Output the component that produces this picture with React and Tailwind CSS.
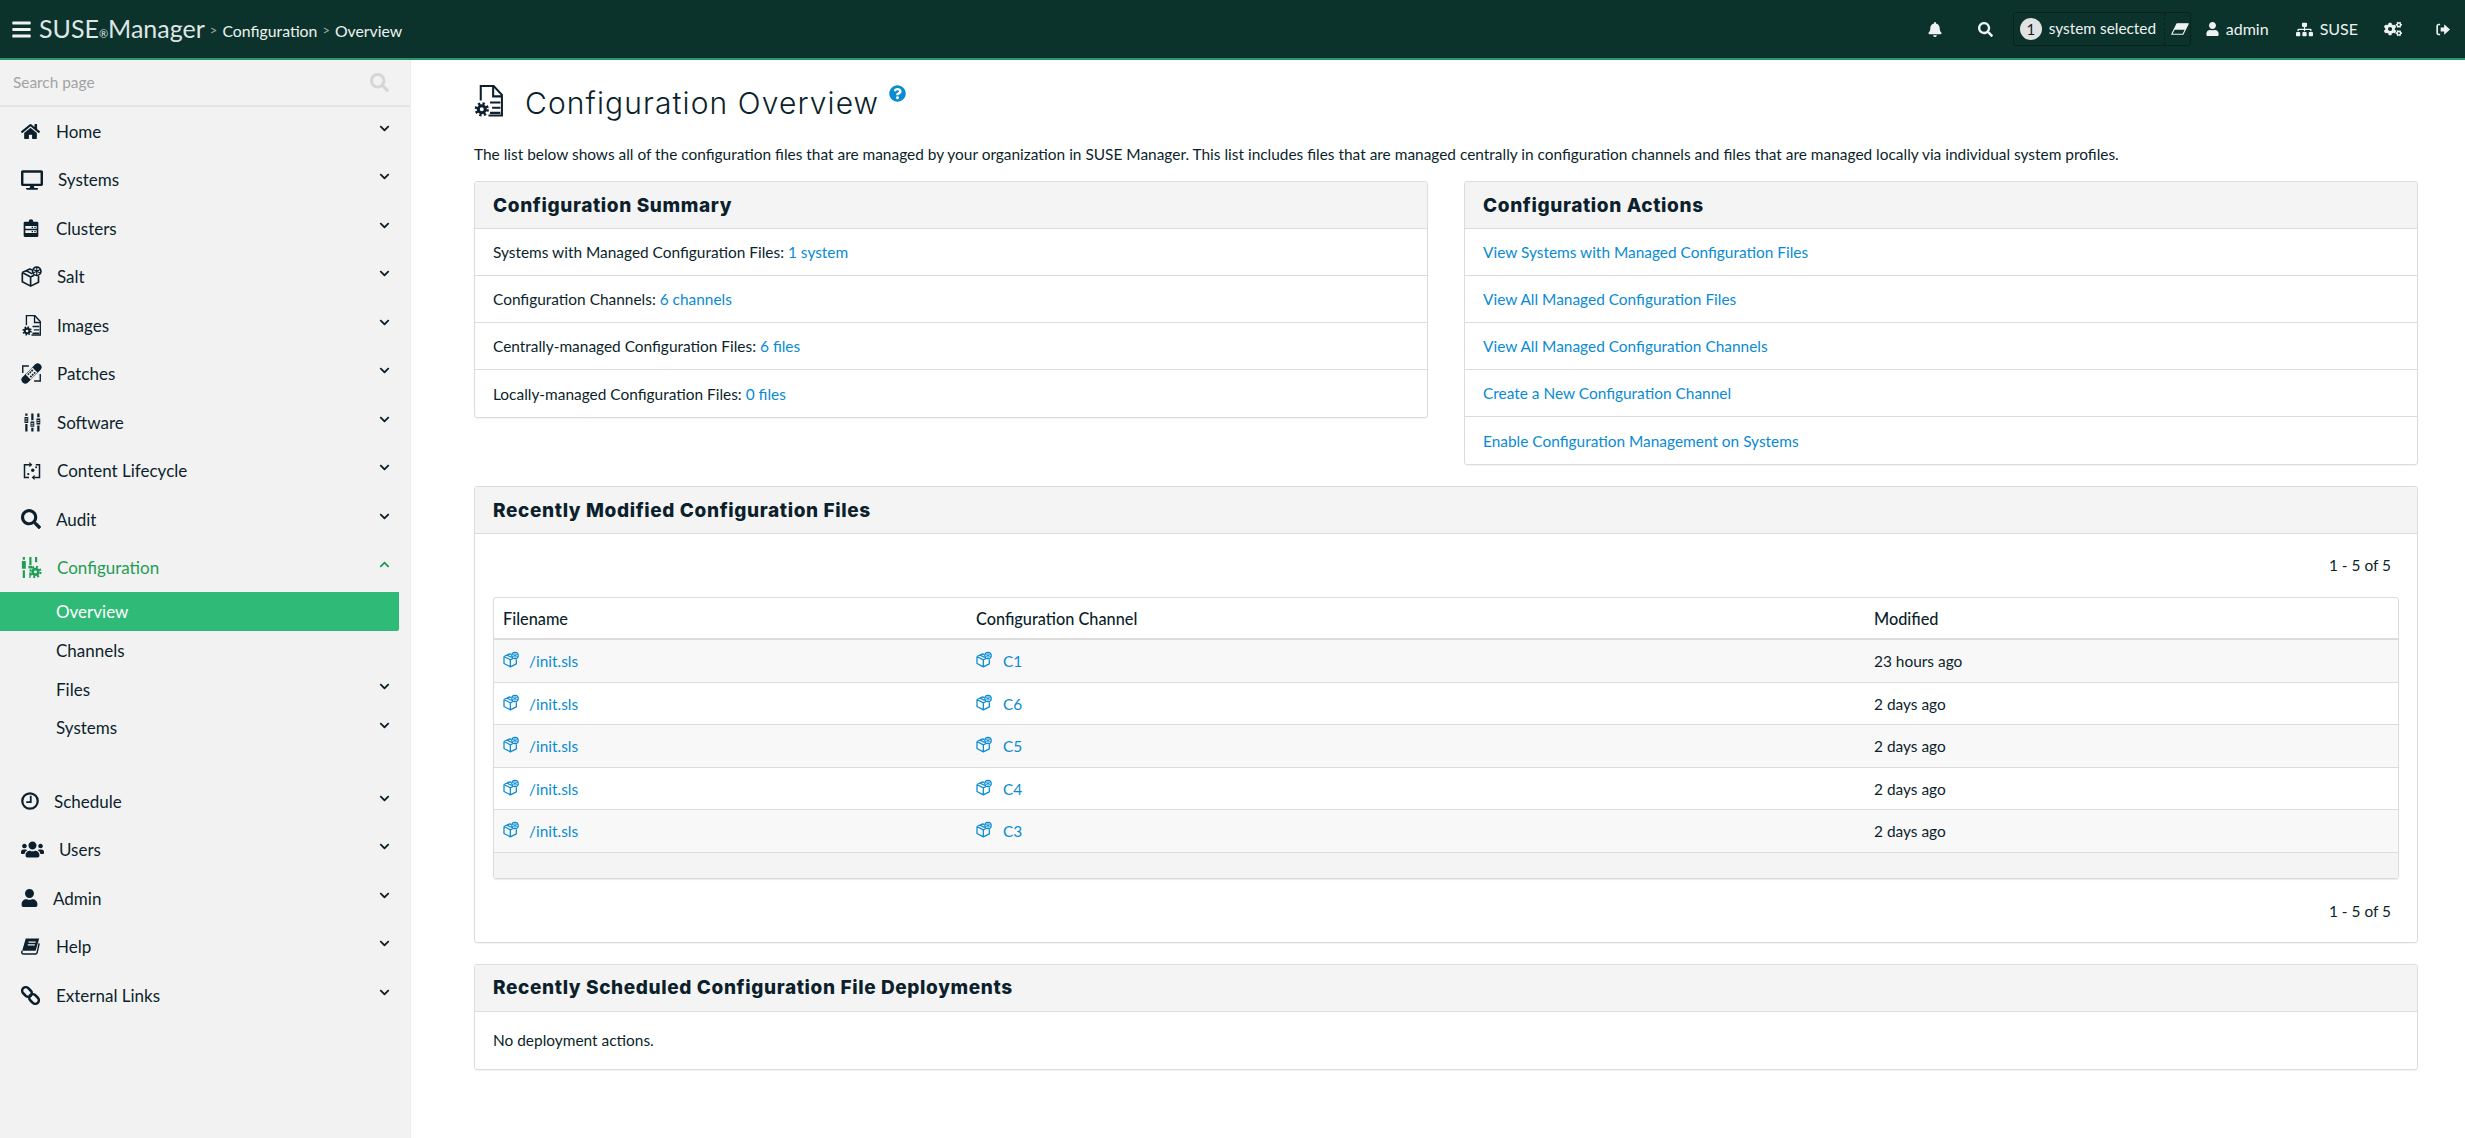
import React from 'react'
import {
  FaHome, FaDesktop, FaSearch, FaUsers, FaUser, FaBell, FaSitemap, FaCogs,
  FaQuestionCircle, FaBars, FaChevronDown, FaChevronUp,
} from 'react-icons/fa'

// Custom spacewalk icons, drawn by hand
const SaltIcon = ({ className }) => (
  <svg viewBox="0 0 24 24" className={className} fill="none" stroke="currentColor" strokeWidth="1.900" strokeLinejoin="round">
    <path d="M1.500 7.500L10 3.500l2.500 1.200M1.500 7.500V18l9.500 5 9-4.500v-7M1.500 7.500L11 12.500l4-2M11 12.500V23" />
    <path d="M6 5.500l7 3.500" />
    <circle cx="18" cy="6" r="4.800" fill="none" />
    <path d="M18 1.500v9M14 4l8 4M22 4l-8 4" strokeWidth="1.300" />
  </svg>
)

const ClusterIcon = ({ className }) => (
  <svg viewBox="0 0 24 27" className={className} fill="currentColor">
    <path d="M3 4h5.500a3.500 3.500 0 017 0H21a2 2 0 012 2v19a2 2 0 01-2 2H3a2 2 0 01-2-2V6a2 2 0 012-2z" />
    <path d="M3.500 10.500h17v4h-17zM3.500 17h17v4h-17z" fill="#f2f2f2" />
    <path d="M13 11.500h2v2h-2zM17 11.500h2v2h-2zM13 18h2v2h-2zM17 18h2v2h-2z" />
  </svg>
)

const DocGearIcon = ({ className, bg }) => (
  <svg viewBox="0 0 28 31" className={className} fill="none" stroke="currentColor">
    <path d="M6.500 15V1H19l8 8.500V29.500H14" strokeWidth="2" />
    <path d="M18.500 1v10h8.500M15.500 17h10M17.500 22h8M15.500 27h10" strokeWidth="2" />
    <circle cx="7.500" cy="23.500" r="5.200" fill={bg} stroke={bg} strokeWidth="5" />
    <circle cx="7.500" cy="23.500" r="3.400" strokeWidth="3" />
    <circle cx="7.500" cy="23.500" r="5.600" strokeWidth="2.600" strokeDasharray="2.200 2.200" />
  </svg>
)

const PatchIcon = ({ className }) => (
  <svg viewBox="0 0 24 24" className={className}>
    <path d="M9 3.500H2v8M15 20.500h7v-8" fill="none" stroke="currentColor" strokeWidth="1.600" />
    <g transform="rotate(-45 12 12)">
      <rect x="-3" y="7" width="30" height="10" rx="5" fill="currentColor" stroke="#f2f2f2" strokeWidth="1.200" />
      <rect x="6.500" y="8" width="11" height="8" fill="#f2f2f2" />
      <path d="M8 9h2v2H8zM11 9h2v2h-2zM14 9h2v2h-2zM8 13h2v2H8zM11 13h2v2h-2zM14 13h2v2h-2z" fill="currentColor" />
    </g>
  </svg>
)

const SoftwareIcon = ({ className }) => (
  <svg viewBox="0 0 24 24" className={className} fill="currentColor">
    <path d="M3 0h3v3H3zM3 14h3v10H3zM11 0h3v9h-3zM11 19h3v5h-3zM19 0h3v5h-3zM19 16h3v8h-3z" />
    <path d="M2 4.500h5v8H2zM10 10.500h5v7h-5zM18 6.500h5v8h-5z" />
    <path d="M3 6.500h3v1H3zM3 9.500h3v1H3zM11 12.500h3v1h-3zM11 15h3v1h-3zM19 8.500h3v1h-3zM19 11.500h3v1h-3z" fill="#f2f2f2" />
  </svg>
)

const ConfigIcon = ({ className }) => (
  <svg viewBox="0 0 24 24" className={className} fill="currentColor">
    <path d="M2 0h2.500v3H2zM2 15h2.500v9H2zM9.500 0H12v9H9.500zM9.500 17.500H11V24H9.500zM16 0h2.500v6H16z" />
    <path d="M1 4.500h4.500v9H1zM8.500 10H13v3H8.500z" />
    <circle cx="16.500" cy="17" r="3.200" fill="none" stroke="currentColor" strokeWidth="3" />
    <circle cx="16.500" cy="17" r="5.800" fill="none" stroke="currentColor" strokeWidth="2.400" strokeDasharray="2.300 2.250" />
  </svg>
)

const LifecycleIcon = ({ className }) => (
  <svg viewBox="0 0 24 24" className={className} fill="none" stroke="currentColor" strokeWidth="2">
    <path d="M9 3.500H2v17h6M15 20.500h7v-17h-5" />
    <path d="M8.500 0v7l4-3.500zM15.500 24v-7l-4 3.500z" fill="currentColor" stroke="none" />
    <circle cx="13" cy="11" r="2.200" fill="currentColor" stroke="none" />
    <circle cx="7" cy="16" r="1.500" fill="currentColor" stroke="none" />
    <circle cx="17.500" cy="7" r="1.300" fill="currentColor" stroke="none" />
  </svg>
)

const ClockIcon = ({ className }) => (
  <svg viewBox="0 0 24 24" className={className} fill="none" stroke="currentColor" strokeWidth="3">
    <circle cx="12" cy="12" r="10.300" />
    <path d="M13 5v8.500H7" strokeWidth="2.400" />
  </svg>
)

const ChainIcon = ({ className }) => (
  <svg viewBox="0 0 24 24" className={className} fill="none" stroke="currentColor" strokeWidth="3.200">
    <g transform="rotate(45 12 12)">
      <rect x="-1" y="7.500" width="13.500" height="9" rx="4.500" />
      <rect x="11.500" y="7.500" width="13.500" height="9" rx="4.500" />
    </g>
  </svg>
)

const BookIcon = ({ className }) => (
  <svg viewBox="0 0 24 24" className={className}>
    <path d="M6 2h17l-4.500 15.500H1.500z" fill="currentColor" />
    <path d="M9.500 6.500h9M8.500 10h9" stroke="#f2f2f2" strokeWidth="1.500" />
    <path d="M1.500 17.500c-1 2-.6 4 1.500 4h15.500c1 0 1.500-.6 1.800-1.500L23 8" fill="none" stroke="currentColor" strokeWidth="1.800" />
  </svg>
)

const EraserIcon = ({ className }) => (
  <svg viewBox="0 0 24 16" className={className}>
    <path d="M8 1h15l-7 14H1z" fill="none" stroke="currentColor" strokeWidth="1.500" strokeLinejoin="round" />
    <path d="M8 1h15l-4 8H4z" fill="currentColor" />
  </svg>
)

const SignOutIcon = ({ className }) => (
  <svg viewBox="0 0 24 22" className={className}>
    <path d="M7 2.500H4.500A2.500 2.500 0 002 5v12a2.500 2.500 0 002.500 2.500H7" fill="none" stroke="currentColor" strokeWidth="2.800" />
    <path d="M8 7.500h6V2l10 9-10 9v-5.500H8z" fill="currentColor" />
  </svg>
)

const navTop = [
  { label: 'Home', icon: FaHome, size: 'w-[19px] h-[19px]', gap: 'ml-[16px]' },
  { label: 'Systems', icon: FaDesktop, size: 'w-[22px] h-[22px]', gap: 'ml-[15px]' },
  { label: 'Clusters', icon: ClusterIcon, size: 'w-[16px] h-[18px] ml-[2px]', gap: 'ml-[17px]' },
  { label: 'Salt', icon: SaltIcon, size: 'w-[21px] h-[21px]', gap: 'ml-[15px]' },
  { label: 'Images', icon: DocGearIcon, size: 'w-[21px] h-[21px]', gap: 'ml-[15px]', bg: '#f2f2f2' },
  { label: 'Patches', icon: PatchIcon, size: 'w-[21px] h-[21px]', gap: 'ml-[15px]' },
  { label: 'Software', icon: SoftwareIcon, size: 'w-[18px] h-[21px] ml-[2px]', gap: 'ml-[16px]' },
  { label: 'Content Lifecycle', icon: LifecycleIcon, size: 'w-[18px] h-[20px] ml-[2px]', gap: 'ml-[16px]' },
  { label: 'Audit', icon: FaSearch, size: 'w-[20px] h-[20px]', gap: 'ml-[15px]' },
]

const navBottom = [
  { label: 'Schedule', icon: ClockIcon, size: 'w-[18px] h-[18px]', gap: 'ml-[15px]' },
  { label: 'Users', icon: FaUsers, size: 'w-[23px] h-[23px]', gap: 'ml-[15px]' },
  { label: 'Admin', icon: FaUser, size: 'w-[17px] h-[18px]', gap: 'ml-[15px]' },
  { label: 'Help', icon: BookIcon, size: 'w-[19px] h-[19px]', gap: 'ml-[16px]' },
  { label: 'External Links', icon: ChainIcon, size: 'w-[19px] h-[19px]', gap: 'ml-[16px]' },
]

const NavRow = ({ item }) => {
  const Icon = item.icon
  return (
    <div className="h-[48.5px] flex items-center pl-[21px] pr-[20px] text-[#0c1f2c]">
      <Icon className={item.size} bg={item.bg} />
      <span className={`${item.gap} text-[17px]`}>{item.label}</span>
      <FaChevronDown className="ml-auto w-[11px] h-[11px] -mt-[6px]" />
    </div>
  )
}

const Sidebar = () => (
  <aside className="w-[411px] shrink-0 bg-[#f2f2f2] border-r border-[#eeeeee]">
    <div className="h-[47px] flex items-center pl-[13px] pr-[21px] border-b-2 border-[#e4e4e4]">
      <span className="text-[15.400px] text-[#a3a3a3]">Search page</span>
      <FaSearch className="ml-auto w-[19px] h-[19px] text-[#d6d6d6]" />
    </div>
    <div>
      {navTop.map((item) => <NavRow key={item.label} item={item} />)}
      <div className="h-[48.5px] flex items-center pl-[21px] pr-[20px] text-[#1f9d55]">
        <ConfigIcon className="w-[21px] h-[21px]" />
        <span className="ml-[15px] text-[17px]">Configuration</span>
        <FaChevronUp className="ml-auto w-[11px] h-[11px] -mt-[6px]" />
      </div>
      <div className="w-[399px] h-[39px] flex items-center pl-[56px] bg-[#30ba78] text-white text-[17px] rounded-br-[2px]">Overview</div>
      <div className="h-[39px] flex items-center pl-[56px] text-[17px] text-[#0c1f2c]">Channels</div>
      <div className="h-[39px] flex items-center pl-[56px] pr-[20px] text-[17px] text-[#0c1f2c]">
        Files
        <FaChevronDown className="ml-auto w-[11px] h-[11px] -mt-[6px]" />
      </div>
      <div className="h-[38px] flex items-center pl-[56px] pr-[20px] text-[17px] text-[#0c1f2c]">
        Systems
        <FaChevronDown className="ml-auto w-[11px] h-[11px] -mt-[6px]" />
      </div>
      <div className="h-[30px]" />
      {navBottom.map((item) => <NavRow key={item.label} item={item} />)}
    </div>
  </aside>
)

const Topbar = () => (
  <header className="h-[60px] shrink-0 flex items-center bg-[#0c322c] border-b-2 border-[#2f9268] text-[#eef3f1] pl-[11px] pr-[15px]">
    <FaBars className="w-[21px] h-[21px]" />
    <span className="ml-[7px] text-[25px] text-[#dfe6e4] flex items-baseline">SUSE<span className="text-[11px]">®</span>Manager</span>
    <span className="ml-[5px] mt-[3px] text-[15.800px] flex items-center">
      <span className="text-[#9fb0ac] text-[13px] mr-[5px]">&gt;</span>Configuration
      <span className="text-[#9fb0ac] text-[13px] mx-[5px]">&gt;</span>Overview
    </span>
    <div className="ml-auto flex items-center text-[16px]">
      <FaBell className="w-[14px] h-[15px]" />
      <FaSearch className="ml-[36px] w-[15px] h-[15px]" />
      <div className="ml-[20px] w-[178px] h-[34px] flex items-center border border-[#08231f] rounded-[3px] pl-[6px] text-[15.400px]">
        <span className="w-[22px] h-[22px] shrink-0 rounded-full bg-[#e2e2e2] text-[#0c1f2c] text-[15px] flex items-center justify-center">1</span>
        <span className="ml-[7px] w-[115px] shrink-0 whitespace-nowrap">system selected</span>
        <span className="h-full flex items-center border-l border-dashed border-[#08231f] pl-[6px]">
          <EraserIcon className="w-[18px] h-[12px]" />
        </span>
      </div>
      <FaUser className="ml-[15px] w-[13px] h-[14px]" />
      <span className="ml-[7px]">admin</span>
      <FaSitemap className="ml-[27px] w-[17px] h-[15px]" />
      <span className="ml-[7px]">SUSE</span>
      <FaCogs className="ml-[26px] w-[18px] h-[16px]" />
      <SignOutIcon className="ml-[34px] w-[14px] h-[13px]" />
    </div>
  </header>
)

const Link = ({ children }) => <a className="text-[#0a8bd2]">{children}</a>

const Panel = ({ title, className, children }) => (
  <section className={`border border-[#dcdcdc] rounded-[3px] shadow-[0_1px_1px_rgba(0,0,0,0.05)] ${className || ''}`}>
    <div className="h-[47px] flex items-center px-[18px] pt-[2px] bg-[#f4f4f4] border-b border-[#dcdcdc] rounded-t-[3px]">
      <h3 className="text-[19px] font-extrabold text-[#0c1f2c] tracking-[0.620px]" style={{ fontFamily: 'Inter, sans-serif' }}>{title}</h3>
    </div>
    {children}
  </section>
)

const ListRow = ({ children }) => (
  <div className="h-[47px] flex items-center px-[18px] pt-[2px] border-b border-[#dcdcdc] last:border-b-0">
    <span>{children}</span>
  </div>
)

const rows = [
  ['C1', '23 hours ago'],
  ['C6', '2 days ago'],
  ['C5', '2 days ago'],
  ['C4', '2 days ago'],
  ['C3', '2 days ago'],
]

const FilesTable = () => (
  <div className="mx-[18px] border border-[#dcdcdc] rounded-[3px] shadow-[0_1px_1px_rgba(0,0,0,0.08)]">
    <div className="h-[42px] grid grid-cols-[473px_898px_1fr] items-center border-b-[2px] border-[#dcdcdc] px-[9px] pt-[2px] text-[16.300px] font-medium text-[#0c1f2c]">
      <span>Filename</span>
      <span>Configuration Channel</span>
      <span>Modified</span>
    </div>
    {rows.map(([channel, modified], i) => (
      <div key={channel} className={`h-[42.5px] grid grid-cols-[473px_898px_1fr] items-center border-b border-[#dcdcdc] px-[9px] pt-[2px] ${i % 2 === 0 ? 'bg-[#f8f8f8]' : 'bg-white'}`}>
        <span className="flex items-center text-[#0a8bd2]">
          <SaltIcon className="w-[16px] h-[17px] -mt-[4px]" />
          <span className="ml-[10px]">/init.sls</span>
        </span>
        <span className="flex items-center text-[#0a8bd2]">
          <SaltIcon className="w-[16px] h-[17px] -mt-[4px]" />
          <span className="ml-[11px]">{channel}</span>
        </span>
        <span>{modified}</span>
      </div>
    ))}
    <div className="h-[25px] bg-[#f4f4f4] rounded-b-[3px]" />
  </div>
)

const App = () => (
  <div className="w-[2465px] h-[1138px] flex flex-col bg-white overflow-hidden text-[#0c1f2c]" style={{ fontFamily: 'Lato, sans-serif' }}>
    <Topbar />
    <div className="flex flex-1 min-h-0">
      <Sidebar />
      <main className="flex-1 pl-[63px] pr-[47px] text-[15.430px]">
        <div className="h-[60px] mt-[13px] flex items-center">
          <DocGearIcon className="w-[29px] h-[32px] -mt-[4px]" bg="#ffffff" />
          <h1 className="ml-[22px] text-[30px] font-light tracking-[1.100px] text-[#0c1f2c]" style={{ fontFamily: 'Inter, sans-serif' }}>Configuration Overview</h1>
          <FaQuestionCircle className="ml-[10px] -mt-[20px] w-[17px] h-[17px] text-[#0a8bd2]" />
        </div>
        <p className="mt-[11px] h-[21px] leading-[21px] whitespace-nowrap">The list below shows all of the configuration files that are managed by your organization in SUSE Manager. This list includes files that are managed centrally in configuration channels and files that are managed locally via individual system profiles.</p>
        <div className="mt-[16px] grid grid-cols-[954px_954px] gap-x-[36px] items-start">
          <Panel title="Configuration Summary">
            <ListRow>Systems with Managed Configuration Files: <Link>1 system</Link></ListRow>
            <ListRow>Configuration Channels: <Link>6 channels</Link></ListRow>
            <ListRow>Centrally-managed Configuration Files: <Link>6 files</Link></ListRow>
            <ListRow>Locally-managed Configuration Files: <Link>0 files</Link></ListRow>
          </Panel>
          <Panel title="Configuration Actions">
            <ListRow><Link>View Systems with Managed Configuration Files</Link></ListRow>
            <ListRow><Link>View All Managed Configuration Files</Link></ListRow>
            <ListRow><Link>View All Managed Configuration Channels</Link></ListRow>
            <ListRow><Link>Create a New Configuration Channel</Link></ListRow>
            <ListRow><Link>Enable Configuration Management on Systems</Link></ListRow>
          </Panel>
        </div>
        <Panel title="Recently Modified Configuration Files" className="mt-[21px]">
          <div className="h-[63px] flex items-center justify-end pr-[26px]">1 - 5 of 5</div>
          <FilesTable />
          <div className="h-[63px] pt-[3px] flex items-center justify-end pr-[26px]">1 - 5 of 5</div>
        </Panel>
        <Panel title="Recently Scheduled Configuration File Deployments" className="mt-[21px]">
          <div className="h-[57px] pt-[2px] flex items-center px-[18px]">No deployment actions.</div>
        </Panel>
      </main>
    </div>
  </div>
)

export default App
